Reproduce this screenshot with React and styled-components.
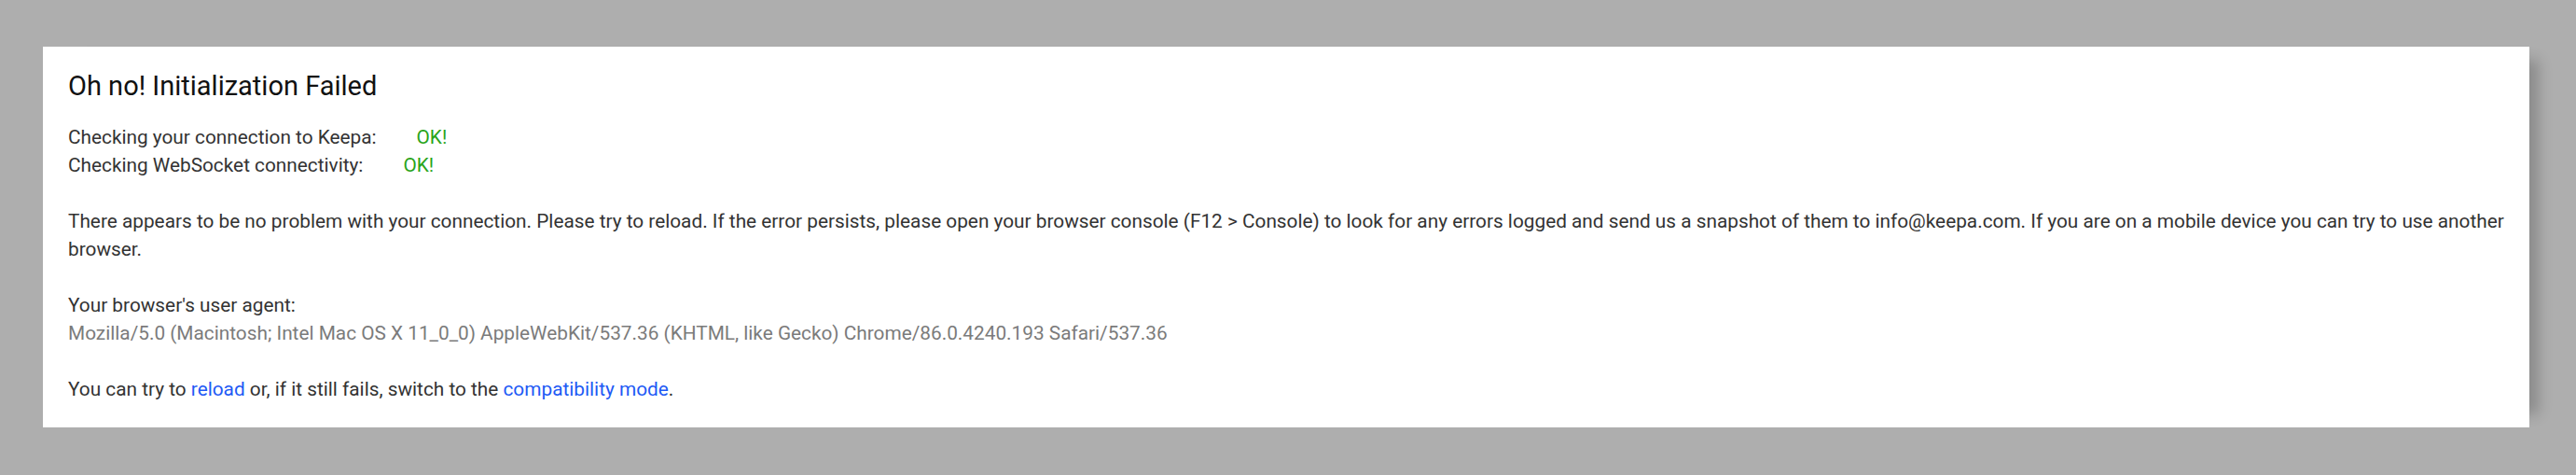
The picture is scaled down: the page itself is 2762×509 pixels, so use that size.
import React from "react";
import styled, { createGlobalStyle } from "styled-components";

const GlobalStyle = createGlobalStyle`
  html, body {
    margin: 0;
    padding: 0;
    background: #aeaeae;
  }
  body {
    font-family: Roboto, "Liberation Sans", Arial, sans-serif;
  }
`;

const USER_AGENT =
  "Mozilla/5.0 (Macintosh; Intel Mac OS X 11_0_0) AppleWebKit/537.36 (KHTML, like Gecko) Chrome/86.0.4240.193 Safari/537.36";

const checks = [
  { label: "Checking your connection to Keepa:", status: "OK!" },
  { label: "Checking WebSocket connectivity:", status: "OK!" },
];

const App = () => {
  return (
    <>
      <GlobalStyle />
      <Page>
        <Card>
          <Title>Oh no! Initialization Failed</Title>

          <Block>
            {checks.map((item) => (
              <Line key={item.label}>
                {item.label}
                <Status>{item.status}</Status>
              </Line>
            ))}
          </Block>

          <Block>
            There appears to be no problem with your connection. Please try to
            reload. If the error persists, please open your browser console (F12
            &gt; Console) to look for any errors logged and send us a snapshot
            of them to info@keepa.com. If you are on a mobile device you can try
            to use another browser.
          </Block>

          <Block>
            <Line>Your browser's user agent:</Line>
            <Agent>{USER_AGENT}</Agent>
          </Block>

          <Block>
            You can try to <Link href="#">reload</Link> or, if it still fails,
            switch to the <Link href="#">compatibility mode</Link>.
          </Block>
        </Card>
      </Page>
    </>
  );
};

export default App;

const Page = styled.div`
  padding: 50px 50px 51px 46px;
`;

const Card = styled.div`
  background: #ffffff;
  padding: 25px 27px 26px 27px;
  box-shadow: 24px 0 14px -14px rgba(0, 0, 0, 0.2);
  color: #333333;
  font-size: 20.8px;
  line-height: 30px;
`;

const Title = styled.h1`
  margin: 0 0 23px 0;
  font-size: 29px;
  line-height: 34px;
  font-weight: 400;
  color: #111111;
`;

const Block = styled.div`
  margin-bottom: 30px;
  &:last-child {
    margin-bottom: 0;
  }
`;

const Line = styled.div``;

const Status = styled.span`
  margin-left: 43px;
  color: #2aa41a;
`;

const Agent = styled.div`
  color: #7b7b7b;
`;

const Link = styled.a`
  color: #1e5af5;
  text-decoration: none;
`;
